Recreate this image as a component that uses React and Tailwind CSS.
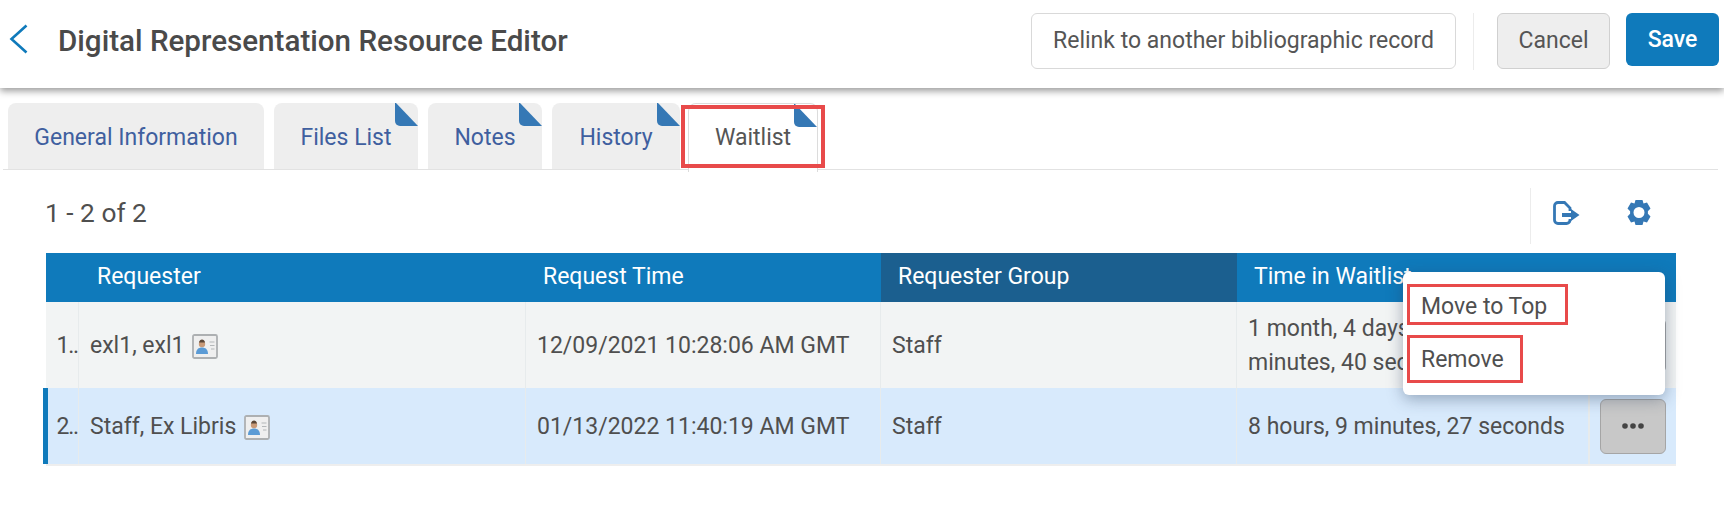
const font = { fontFamily: "Roboto, sans-serif" };

const tabs = [
  { label: "General Information", width: "w-[256px]" },
  { label: "Files List", width: "w-[144px]", marked: true },
  { label: "Notes", width: "w-[114px]", marked: true },
  { label: "History", width: "w-[128px]", marked: true },
];

const rows = [
  {
    num: "1..",
    name: "exl1, exl1",
    time: "12/09/2021 10:28:06 AM GMT",
    wait: "1 month, 4 days, 6 hours, 21 minutes, 40 seconds",
    rowClass: "h-[86px] bg-[#f2f4f4]",
  },
  {
    num: "2..",
    name: "Staff, Ex Libris",
    time: "01/13/2022 11:40:19 AM GMT",
    wait: "8 hours, 9 minutes, 27 seconds",
    rowClass: "h-[76px] bg-[#d8eafc]",
    active: true,
  },
];

function BackIcon() {
  return (
    <svg className="mt-[11px] ml-[3px] h-[30px] w-[20px] shrink-0" viewBox="0 0 20 30" fill="none">
      <path d="M17.500 1.500 2.500 15l15 13.500" stroke="#0f7abb" strokeWidth="2.600" />
    </svg>
  );
}

function Corner() {
  return (
    <svg className="absolute right-0 top-0 h-[23px] w-[23px]" viewBox="0 0 23 23">
      <path d="M0 0h1L23 23H5a5 5 0 0 1-5-5z" fill="#3578b5" />
    </svg>
  );
}

function ContactIcon() {
  return (
    <svg className="ml-[8px] h-[25px] w-[26px] shrink-0" viewBox="0 0 26 25">
      <rect x="1" y="1" width="24" height="23" rx="1.500" fill="#efefef" stroke="#adb0b2" strokeWidth="1.800" />
      <circle cx="10" cy="10" r="3.200" fill="#c99a78" />
      <path d="M7 8.500c.5-4 5.500-4 6 0z" fill="#5b4636" />
      <path d="M4 20c0-4.500 2.500-6.500 6-6.500s6 2 6 6.500z" fill="#5b9bd5" />
      <path d="M17.500 8h5M18 11.500h4.500M19 15h3.500" stroke="#b4b8ba" strokeWidth="1.200" />
    </svg>
  );
}

function ExportIcon() {
  return (
    <svg className="h-[24px] w-[27px]" viewBox="0 0 27 24" fill="none">
      <path d="M17 18v1a3.500 3.500 0 0 1-3.500 3.500H5A3.500 3.500 0 0 1 1.500 19V5A3.500 3.500 0 0 1 5 1.500h6.500L17 7v3" stroke="#3578b5" strokeWidth="2.800" />
      <path d="M9 12h9V8l8.500 6-8.500 6v-4H9z" fill="#3578b5" />
    </svg>
  );
}

function GearIcon() {
  return (
    <svg className="h-[25px] w-[24px]" viewBox="0 0 24 25">
      <path
        fillRule="evenodd"
        fill="#3578b5"
        d="M8.500 0h7l1 3.500 3.500-.9 3.500 6-2.600 2.700v2.400l2.600 2.700-3.500 6-3.500-.9-1 3.500h-7l-1-3.500-3.500.9-3.500-6 2.600-2.700v-2.400L.5 8.600l3.500-6 3.500.9zM12 7a5.500 5.500 0 1 0 0 11 5.500 5.500 0 0 0 0-11z"
      />
    </svg>
  );
}

function DotsIcon() {
  return (
    <svg className="h-[6px] w-[22px]" viewBox="0 0 22 6" fill="#444">
      <circle cx="3" cy="3" r="2.800" />
      <circle cx="11" cy="3" r="2.800" />
      <circle cx="19" cy="3" r="2.800" />
    </svg>
  );
}

export default function App() {
  return (
    <div className="h-[518px] w-[1724px] overflow-hidden bg-white text-[#4f4f4f]" style={font}>
      <header className="relative z-10 flex h-[88px] items-start bg-white pl-[6px] pr-[5px] pt-[13px] shadow-[0_3px_7px_rgba(0,0,0,0.4)]">
        <BackIcon />
        <h1 className="ml-[29px] mt-[8px] text-[29.6px] font-medium leading-[40px] text-[#4a4a4a]">
          Digital Representation Resource Editor
        </h1>
        <div className="ml-auto flex items-start">
          <button className="h-[56px] w-[425px] rounded-[6px] border border-[#d9d9d9] bg-white pt-[1px] text-[23px] text-[#555]">
            Relink to another bibliographic record
          </button>
          <div className="ml-[17px] h-[57px] w-px bg-[#ececec]" />
          <button className="ml-[23px] h-[56px] w-[113px] rounded-[6px] border border-[#d0d0d0] bg-[#eeeeee] pt-[1px] text-[23px] text-[#555]">
            Cancel
          </button>
          <button className="ml-[16px] h-[53px] w-[93px] rounded-[6px] bg-[#0f7abb] pt-[2px] text-[23px] font-medium text-white">
            Save
          </button>
        </div>
      </header>

      <nav className="ml-[3px] mr-[6px] mt-[15px] flex h-[67px] gap-[10px] border-b border-[#e2e2e2] pl-[5px]">
        {tabs.map((tab) => (
          <div
            key={tab.label}
            className={`relative flex h-[66px] items-center justify-center rounded-t-[8px] bg-[#eeeeee] pt-[4px] text-[23px] text-[#3f5f9f] ${tab.width}`}
          >
            {tab.label}
            {tab.marked && <Corner />}
          </div>
        ))}
        <div className="relative -ml-[2px] -mb-[2px] flex h-[69px] w-[130px] items-center justify-center rounded-t-[8px] border-x border-t border-[#dcdcdc] bg-white pt-[1px] text-[23px] text-[#555]">
          Waitlist
          <Corner />
          <div className="absolute -left-[8px] top-[1px] h-[63px] w-[144px] border-[4px] border-[#e84a4a]" />
        </div>
      </nav>

      <div className="ml-[45px] mr-[49px] flex h-[83px] items-center justify-between">
        <span className="pt-[3px] text-[26.3px] leading-none">1 - 2 of 2</span>
        <div className="mt-[8px] flex h-[56px] items-center border-l border-[#ececec] pb-[6px] pl-[22px]">
          <ExportIcon />
          <div className="ml-[47px] mr-[24px]">
            <GearIcon />
          </div>
        </div>
      </div>

      <div className="relative ml-[46px] w-[1630px] border-b-2 border-[#eeeeee]">
        <div className="flex h-[49px] items-center bg-[#0f7abb] text-[23px] text-white">
          <div className="w-[33px]" />
          <div className="w-[447px] pl-[18px]">Requester</div>
          <div className="w-[355px] pl-[17px]">Request Time</div>
          <div className="flex h-full w-[356px] items-center bg-[#1b5f8f] pl-[17px]">Requester Group</div>
          <div className="pl-[17px]">Time in Waitlist</div>
        </div>

        {rows.map((row) => (
          <div key={row.num} className={`relative flex items-center text-[23px] ${row.rowClass}`}>
            {row.active && <div className="absolute -left-[3px] top-0 h-full w-[5px] bg-[#0f7abb]" />}
            <div className="flex h-full w-[33px] items-center justify-end overflow-hidden border-r border-[#e7ebec] pt-[2px] tracking-[-1.2px]">
              {row.num}
            </div>
            <div className="flex h-full w-[447px] items-center border-r border-[#e7ebec] pl-[11px] pt-[2px]">
              {row.name}
              <ContactIcon />
            </div>
            <div className="flex h-full w-[355px] items-center border-r border-[#e7ebec] pl-[11px] pt-[2px]">{row.time}</div>
            <div className="flex h-full w-[356px] items-center border-r border-[#e7ebec] pl-[11px] pt-[2px]">Staff</div>
            <div className="flex h-full w-[353px] items-center border-r-2 border-[#e7ebec] pl-[11px] pt-[1px] leading-[34px]">
              {row.wait}
            </div>
            <div className="flex h-full flex-1 items-center justify-center">
              <button className="flex h-[55px] w-[66px] items-center justify-center rounded-[6px] border border-[#a5a5a5] bg-[#c8c8c8]">
                <DotsIcon />
              </button>
            </div>
          </div>
        ))}

        <div className="absolute left-[1357px] top-[19px] flex h-[123px] w-[262px] flex-col rounded-[6px] bg-white pl-[4px] pt-[12px] text-[23px] shadow-[0_4px_16px_rgba(40,60,90,0.4)]">
          <div className="flex h-[41px] w-[161px] items-center border-[3px] border-[#e84a4a] pl-[11px] pt-[5px]">Move to Top</div>
          <div className="mt-[10px] flex h-[48px] w-[116px] items-center border-[3px] border-[#e84a4a] pl-[11px] pt-[3px]">Remove</div>
        </div>
      </div>
    </div>
  );
}
